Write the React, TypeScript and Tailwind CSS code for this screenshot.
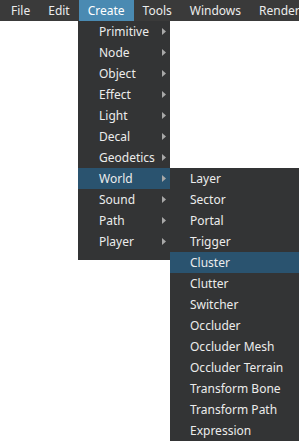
const topItems = ["File", "Edit", "Create", "Tools", "Windows", "Rendering"];

const createItems = [
  "Primitive",
  "Node",
  "Object",
  "Effect",
  "Light",
  "Decal",
  "Geodetics",
  "World",
  "Sound",
  "Path",
  "Player",
];

const worldItems = [
  "Layer",
  "Sector",
  "Portal",
  "Trigger",
  "Cluster",
  "Clutter",
  "Switcher",
  "Occluder",
  "Occluder Mesh",
  "Occluder Terrain",
  "Transform Bone",
  "Transform Path",
  "Expression",
];

const Arrow = () => (
  <svg width="4" height="7" viewBox="0 0 4 7" className="shrink-0">
    <path d="M0 0 L4 3.5 L0 7 Z" fill="#a8a8a8" />
  </svg>
);

export default function App() {
  return (
    <main
      className="relative w-[299px] h-[441px] bg-white overflow-hidden text-[12px] text-[#ececec]"
      style={{ fontFamily: '"Noto Sans", "DejaVu Sans", sans-serif' }}
    >
      {/* menu bar */}
      <nav className="flex h-[21px] bg-[#3a3a3a] pl-[2px] whitespace-nowrap">
        {topItems.map((t) => (
          <div
            key={t}
            className={
              "flex items-center px-[9px] leading-none " +
              (t === "Create" ? "bg-[#4a8ab2] text-white" : "")
            }
          >
            {t}
          </div>
        ))}
      </nav>

      {/* Create dropdown */}
      <div className="absolute left-[78px] top-[21px] w-[92px] bg-[#333435] pb-[8px]">
        {createItems.map((t) => (
          <div
            key={t}
            className={
              "flex h-[21px] items-center justify-between pl-[21px] pr-[4px] " +
              (t === "World" ? "bg-[#2a536f]" : "")
            }
          >
            <span>{t}</span>
            <Arrow />
          </div>
        ))}
      </div>

      {/* World submenu */}
      <div className="absolute left-[170px] top-[168px] w-[129px] bg-[#333435] pb-[8px]">
        {worldItems.map((t) => (
          <div
            key={t}
            className={
              "flex h-[21px] items-center pl-[20px] whitespace-nowrap " +
              (t === "Cluster" ? "bg-[#2a536f]" : "")
            }
          >
            {t}
          </div>
        ))}
      </div>
    </main>
  );
}
